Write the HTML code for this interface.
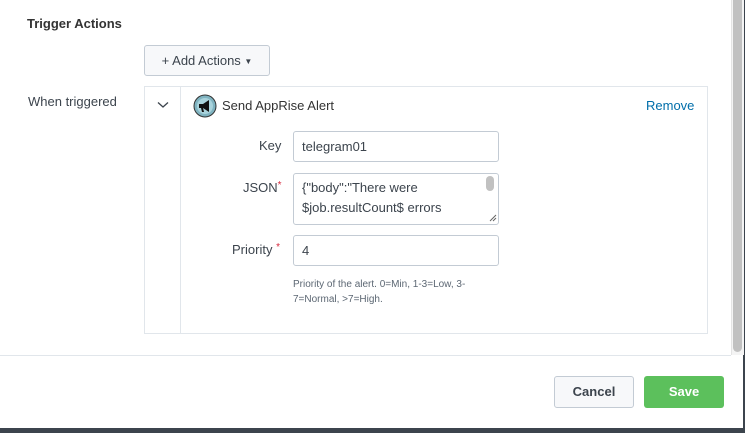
<!DOCTYPE html>
<html><head><style>
body{margin:0;width:745px;height:433px;background:#3c444d;font-family:"Liberation Sans",sans-serif;overflow:hidden;position:relative;color:#3c444d}
.modal{position:absolute;left:0;top:0;width:743px;height:428px;background:#fff}
.sb{position:absolute;left:731px;top:0;width:12px;height:355px;background:#f4f4f4;border-left:1px solid #e4e4e4}
.thumb{position:absolute;left:733px;top:0;width:9px;height:352px;background:#c1c1c1;border-radius:0 0 5px 5px}
.abs{position:absolute}
.h{left:27px;top:16px;font-size:13px;font-weight:bold;color:#333}
.btn{border:1px solid #c3cbd4;background:#f7f8fa;border-radius:3px;box-sizing:border-box;font-size:13px;text-align:center}
.lbl{font-size:13px;color:#3c444d}
.inp{border:1px solid #c3cbd4;border-radius:3px;box-sizing:border-box;font-size:13px;padding-left:8px;color:#3c444d}
</style></head><body>
<div class="modal">
<div class="abs h">Trigger Actions</div>
<div class="abs btn" style="left:144px;top:45px;width:126px;height:31px;line-height:29px;color:#3c444d">+ Add Actions <span style="font-size:8px;vertical-align:1px">▼</span></div>
<div class="abs lbl" style="left:28px;top:94px">When triggered</div>
<div class="abs" style="left:144px;top:86px;width:564px;height:248px;border:1px solid #e1e6eb;box-sizing:border-box"></div>
<div class="abs" style="left:180px;top:87px;width:1px;height:246px;background:#e1e6eb"></div>
<svg class="abs" style="left:157px;top:101px" width="12" height="8"><path d="M1 1.5L6 6L11 1.5" fill="none" stroke="#3c444d" stroke-width="1.3"/></svg>
<svg class="abs" style="left:193px;top:94px" width="24" height="24"><circle cx="12" cy="12" r="11" fill="#7fb3c0" stroke="#333" stroke-width="1"/><circle cx="12" cy="12" r="8" fill="#a9d3dc"/><path d="M6 10h4l6-4v12l-6-4H6z" fill="#111"/><path d="M8 14l1 4h2l-1-4z" fill="#111"/></svg>
<div class="abs" style="left:222px;top:98px;font-size:13px;color:#333">Send AppRise Alert</div>
<div class="abs" style="left:646px;top:98px;font-size:13px;color:#006eaa">Remove</div>
<div class="abs lbl" style="left:259px;top:138px">Key</div>
<div class="abs inp" style="left:293px;top:131px;width:206px;height:31px;line-height:29px">telegram01</div>
<div class="abs lbl" style="left:243px;top:180px">JSON<span style="color:#d6263b;font-size:10px;vertical-align:top">*</span></div>
<div class="abs inp" style="left:293px;top:173px;width:206px;height:52px;line-height:20px;overflow:hidden;padding-top:4px">{"body":"There were<br>$job.resultCount$ errors</div>
<div class="abs" style="left:486px;top:176px;width:8px;height:15px;background:#c1c1c1;border-radius:4px"></div>
<svg class="abs" style="left:488px;top:213px" width="9" height="9"><path d="M8 2L2 8M8 5L5 8" stroke="#666" stroke-width="1"/></svg>
<div class="abs lbl" style="left:232px;top:242px">Priority <span style="color:#d6263b;font-size:10px;vertical-align:top">*</span></div>
<div class="abs inp" style="left:293px;top:235px;width:206px;height:31px;line-height:29px">4</div>
<div class="abs" style="left:293px;top:277px;font-size:10px;line-height:15px;color:#5c6773;width:215px">Priority of the alert. 0=Min, 1-3=Low, 3-<br>7=Normal, &gt;7=High.</div>
<div class="abs" style="left:0;top:355px;width:731px;height:1px;background:#e1e6eb"></div>
<div class="abs btn" style="left:554px;top:376px;width:80px;height:32px;line-height:30px;font-weight:bold;color:#3c444d">Cancel</div>
<div class="abs" style="left:644px;top:376px;width:80px;height:32px;line-height:32px;background:#5cc05c;border-radius:3px;color:#fff;font-weight:bold;font-size:13px;text-align:center">Save</div>
</div>
<div class="sb"></div><div class="thumb"></div>
</body></html>
